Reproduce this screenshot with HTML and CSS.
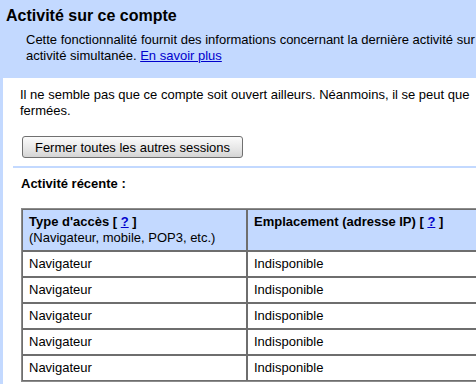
FILE: index.html
```html
<!DOCTYPE html>
<html>
<head>
    <meta charset="utf-8">
    <title>Activité sur ce compte</title>
    <link rel="stylesheet" href="styles.css">
</head>
<body>
    <div class="page">
        <div class="header">
            <h1 class="title">Activité sur ce compte</h1>
            <p class="intro">
                Cette fonctionnalité fournit des informations concernant la dernière activité sur<br>
                activité simultanée. <a href="#">En savoir plus</a>
            </p>
        </div>

        <div class="panel">
            <p class="status">
                Il ne semble pas que ce compte soit ouvert ailleurs. Néanmoins, il se peut que<br>
                fermées.
            </p>
            <button class="btn">Fermer toutes les autres sessions</button>
            <hr class="divider">
            <h2 class="recent">Activité récente :</h2>

            <table class="activity">
                <tr>
                    <th class="col-type">
                        <b>Type d'accès [ <a href="#">?</a> ]</b><br>
                        (Navigateur, mobile, POP3, etc.)
                    </th>
                    <th class="col-place">
                        <b>Emplacement (adresse IP) [ <a href="#">?</a> ]</b>
                    </th>
                </tr>
                <tr><td>Navigateur</td><td>Indisponible</td></tr>
                <tr><td>Navigateur</td><td>Indisponible</td></tr>
                <tr><td>Navigateur</td><td>Indisponible</td></tr>
                <tr><td>Navigateur</td><td>Indisponible</td></tr>
                <tr><td>Navigateur</td><td>Indisponible</td></tr>
            </table>
        </div>
    </div>
</body>
</html>
```

FILE: styles.css
```css
html {
    overflow: hidden;
}

body {
    margin: 0;
    font-family: 'Liberation Sans', Arial, sans-serif;
    font-size: 13px;
    line-height: 16px;
    color: #000;
    background-color: #c3d9ff;
}

a {
    color: #0000cc;
}

.page {
    width: 640px;
}

.header {
    padding: 6px 0 14px 0;
}

.title {
    margin: 0 0 7px 6px;
    font-size: 16px;
    line-height: 19px;
    font-weight: bold;
}

.intro {
    margin: 0 0 0 26px;
    white-space: nowrap;
}

.panel {
    margin-left: 3px;
    padding: 9px 0 40px 0;
    background-color: #fff;
}

.status {
    margin: 0 0 17px 17px;
    white-space: nowrap;
}

.btn {
    display: block;
    margin-left: 19px;
    width: 221px;
    height: 22px;
    padding: 0;
    font-family: 'Liberation Sans', Arial, sans-serif;
    font-size: 13px;
    color: #000;
    background: linear-gradient(#fbfbfb, #e6e6e6 60%, #d4d4d4);
    border: 1px solid #707070;
    border-radius: 3px;
}

.divider {
    margin: 8px 0 8px 10px;
    height: 2px;
    border: none;
    background-color: #c3d9ff;
}

.recent {
    margin: 0 0 16px 18px;
    font-size: 13px;
    line-height: 16px;
    font-weight: bold;
}

.activity {
    margin-left: 18px;
    border-collapse: separate;
    border-spacing: 0;
    border: 1px solid #8c8c8c;
}

.activity th,
.activity td {
    padding: 4px 6px;
    border: 1px solid #6e6e6e;
    text-align: left;
    vertical-align: top;
    font-weight: normal;
}

.activity th {
    background-color: #c3d9ff;
}

.col-type {
    width: 211px;
}

.col-place {
    width: 360px;
}
```
